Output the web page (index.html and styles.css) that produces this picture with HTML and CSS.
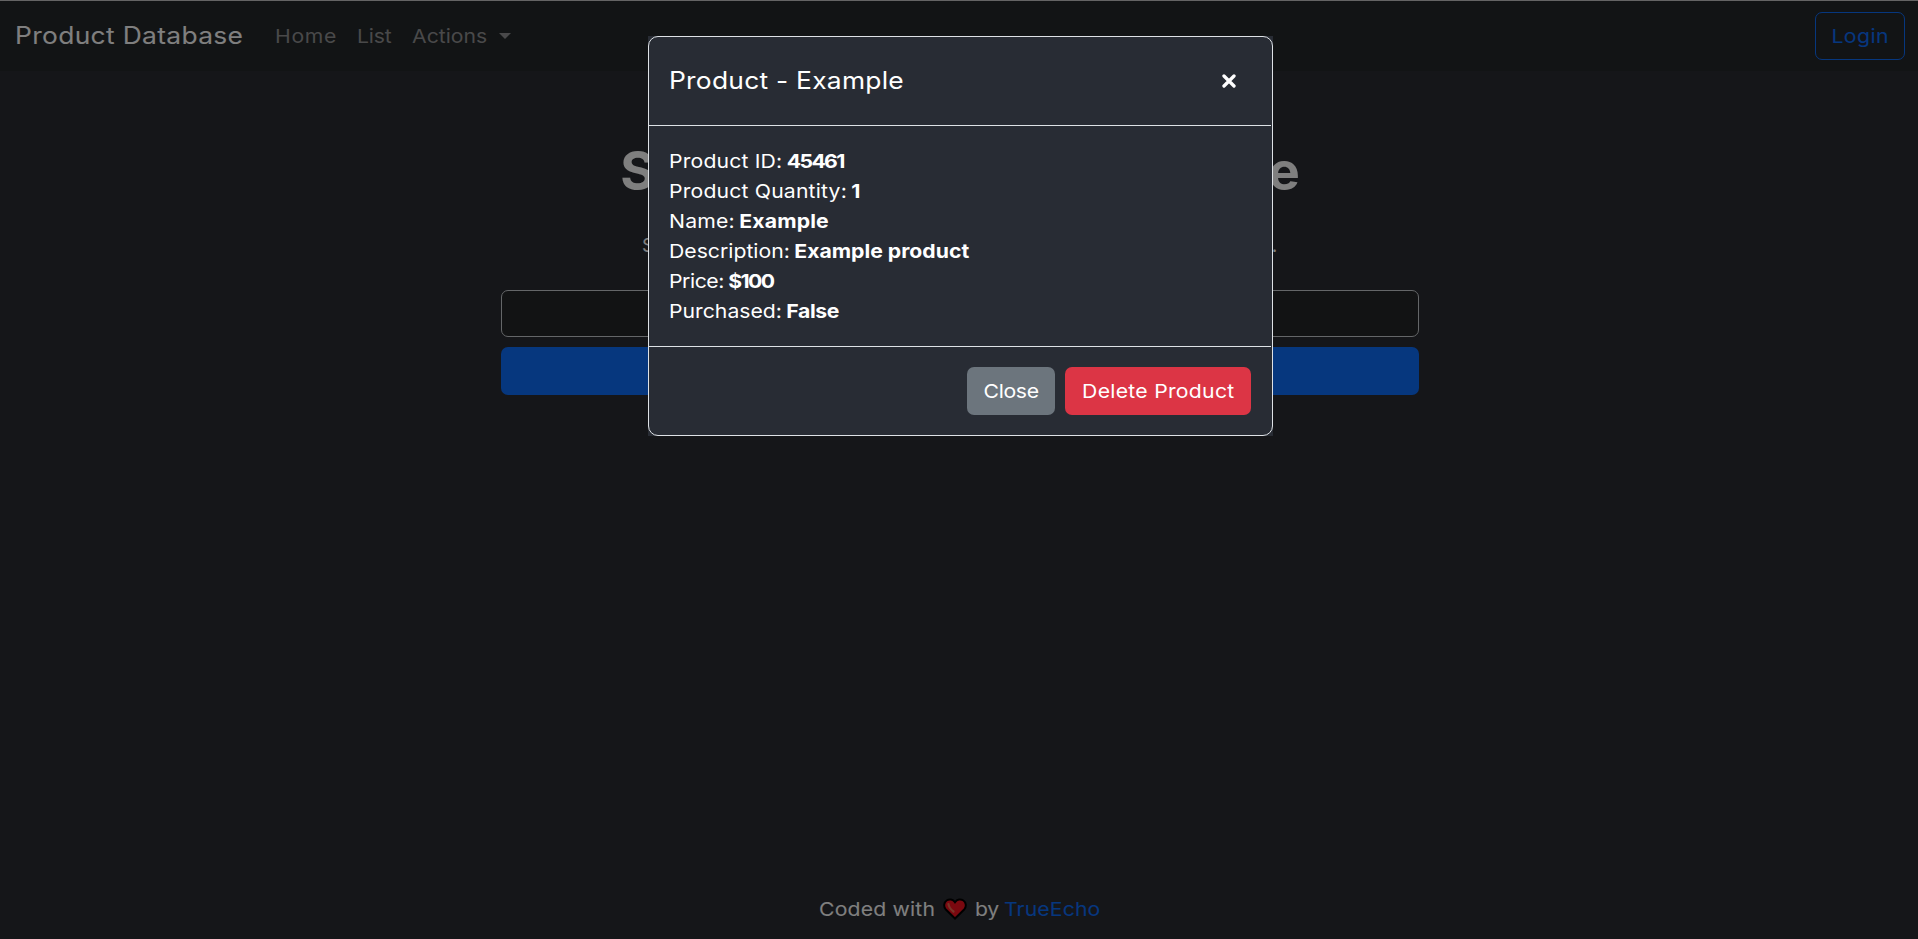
FILE: index.html
```html
<!DOCTYPE html>
<html lang="en">
<head>
<meta charset="utf-8">
<title>Product Database</title>
<link rel="stylesheet" href="styles.css">
</head>
<body>
<div class="page">
  <nav class="navbar">
    <a class="brand wide">Product Database</a>
    <a class="link home wide">Home</a>
    <a class="link list wide">List</a>
    <a class="link actions wide">Actions</a>
    <span class="caret"></span>
    <a class="btn login"><span class="label">Login</span></a>
  </nav>
  <main class="search">
    <h1>Search the Database</h1>
    <p>Search for a product by entering its ID or name below.</p>
    <input class="field" type="text" aria-label="Product ID">
    <button class="btn submit" type="button" aria-label="Search"></button>
  </main>
  <footer class="credits">
    <span class="coded wide">Coded with</span>
    <svg class="heart" width="24" height="22" viewBox="0 0 24 22"><path d="M12 20.5 2.6 11.2C.4 8.6.8 4.4 3.6 2.5 6.3.7 10 1.3 12 4.2 14 1.3 17.7.7 20.4 2.5 23.2 4.4 23.6 8.6 21.4 11.2Z" fill="#f5111e" stroke="#000" stroke-width="2"/><path d="M5.5 6c.3 3 2.3 5.5 5 7.5" fill="none" stroke="#ef6a50" stroke-width="2.2" stroke-linecap="round"/></svg>
    <span class="by wide">by</span>
    <a class="author wide">TrueEcho</a>
  </footer>
</div>
<div class="backdrop"></div>
<div class="modal">
  <div class="modal-header">
    <h5 class="wide">Product - Example</h5>
    <svg class="close" width="14" height="14" viewBox="0 0 14 14"><path d="M2 2 12 12M12 2 2 12" stroke="#fff" stroke-width="3.3" stroke-linecap="round"/></svg>
  </div>
  <div class="modal-body">
    <div class="row wide"><span class="k-id">Product ID:</span><b class="v-id">45461</b></div>
    <div class="row wide"><span class="k-qty">Product Quantity:</span><b>1</b></div>
    <div class="row wide"><span class="k-name">Name:</span><b class="v-name">Example</b></div>
    <div class="row wide"><span class="k-desc">Description:</span><b class="v-desc">Example product</b></div>
    <div class="row wide"><span class="k-price">Price:</span><b class="v-price">$100</b></div>
    <div class="row wide"><span class="k-bought">Purchased:</span><b class="v-bought">False</b></div>
  </div>
  <div class="modal-footer">
    <button class="btn dismiss" type="button"><span class="label">Close</span></button>
    <button class="btn delete" type="button"><span class="label">Delete Product</span></button>
  </div>
</div>
</body>
</html>
```
FILE: styles.css
```css
* { box-sizing: border-box; }
body {
  margin: 0;
  height: 939px;
  overflow: hidden;
  background: #2b2d33;
  color: #fff;
  font: 440 19.3px/30px Inter, "Liberation Sans", sans-serif;
}
h1, h5, p { margin: 0; }
.wide { transform: scaleX(1.1); transform-origin: left center; }
.label { display: inline-block; transform: scaleX(1.1); }
.page { height: 939px; display: flex; flex-direction: column; }
.navbar {
  height: 71px;
  flex: none;
  display: flex;
  align-items: center;
  padding: 0 13px 1px 15px;
  border-top: 1px solid #c8c8c8;
  background: #25282a;
}
.brand { width: 260px; font-size: 24px; letter-spacing: .29px; white-space: nowrap; }
.link { color: #929394; padding-top: 1px; }
.home { width: 82px; letter-spacing: .6px; }
.list { width: 55px; letter-spacing: -.2px; }
.actions { width: 87px; }
.caret {
  border: 6px solid transparent;
  border-top-color: #929394;
  border-bottom: 0;
}
.btn {
  height: 48px;
  border: 1px solid transparent;
  border-radius: 7px;
  padding: 0;
  color: #fff;
  font: inherit;
  text-align: center;
}
.login {
  width: 90px;
  margin-left: auto;
  padding-top: 8px;
  border-color: #0d6efd;
  color: #0d6efd;
  letter-spacing: .4px;
}
.search {
  width: 918px;
  margin: 63px 0 0 501px;
  display: flex;
  flex-direction: column;
  text-align: center;
}
h1 { height: 75px; font-size: 53px; line-height: 75px; font-weight: 700; letter-spacing: 7.95px; padding-left: 8px; white-space: nowrap; }
.search p { margin: 21px 0 30px; letter-spacing: 2.72px; padding-left: 2px; white-space: nowrap; }
.field {
  height: 47px;
  border: 1px solid #c8ccd0;
  border-radius: 7px;
  background: #242628;
}
.submit { margin-top: 10px; background: #0d6efd; }
.credits {
  margin: auto 0 15px 819px;
  height: 30px;
  display: flex;
  align-items: center;
}
.coded { width: 124px; letter-spacing: .15px; }
.heart { width: 24px; }
.by { width: 28px; margin-left: 8px; letter-spacing: -.4px; }
.author { margin-left: 1px; color: #0d6efd; letter-spacing: .1px; }
.backdrop { position: absolute; inset: 0; background: rgba(0, 0, 0, .5); }
.modal { position: absolute; left: 648px; top: 36px; width: 625px; background: #282c34; }
.modal::after {
  content: "";
  position: absolute;
  inset: 0;
  border: 1px solid #dee2e6;
  border-radius: 10px;
  pointer-events: none;
}
.modal-header {
  height: 90px;
  margin: 0 2px 0 1px;
  padding: 0 35px 0 20px;
  border-bottom: 1px solid #dee2e6;
  display: flex;
  align-items: center;
  justify-content: space-between;
}
h5 { font-size: 24px; font-weight: inherit; letter-spacing: .22px; }
.modal-body { padding: 20px 21px; }
.row { width: 500px; height: 30px; display: flex; gap: 4px; }
.row b { font-weight: 700; }
.k-id { letter-spacing: .15px; }
.v-id { letter-spacing: -1.5px; }
.k-qty { letter-spacing: .15px; }
.k-name { letter-spacing: .15px; }
.v-name { letter-spacing: .15px; }
.k-price { letter-spacing: -.4px; }
.v-price { letter-spacing: -1.5px; }
.v-bought { letter-spacing: -.4px; }
.modal-footer {
  height: 90px;
  margin: 0 2px 0 1px;
  padding: 20px 20px 0 0;
  border-top: 1px solid #dee2e6;
  display: flex;
  justify-content: flex-end;
  gap: 10px;
}
.dismiss { width: 88px; background: #6c757d; letter-spacing: -.3px; }
.delete { width: 186px; background: #dc3545; letter-spacing: .24px; }
```
